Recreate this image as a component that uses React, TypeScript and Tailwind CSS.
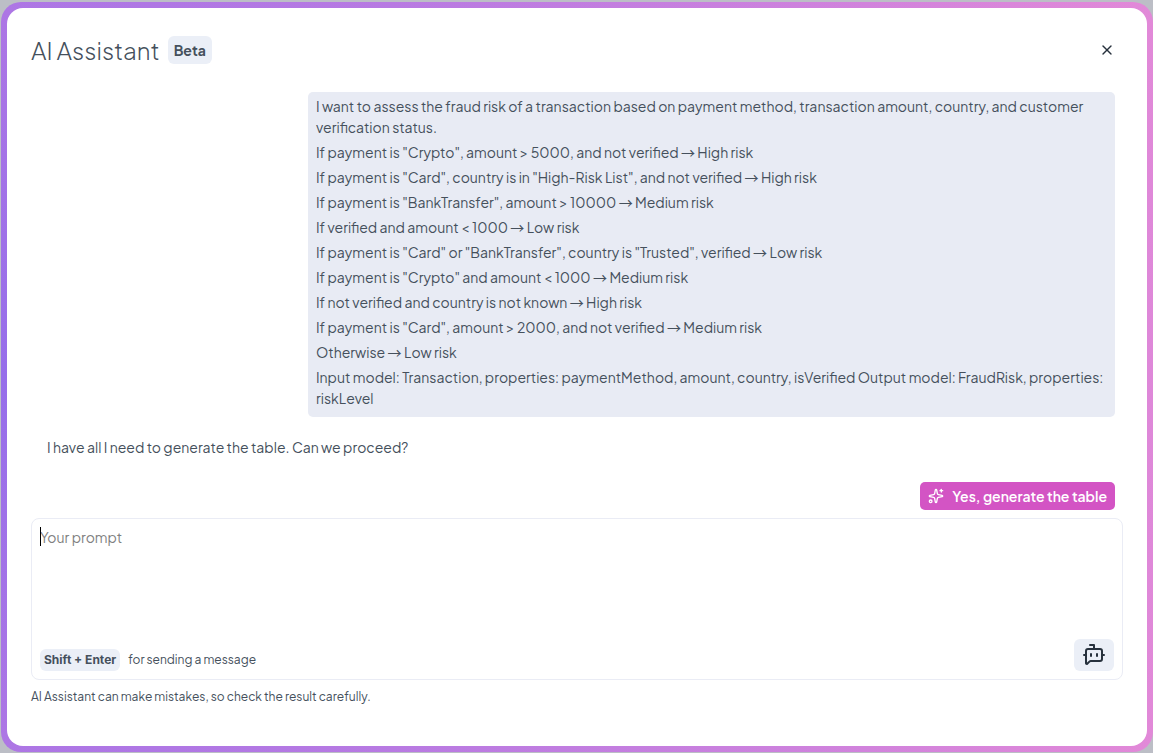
import { Fragment } from "react";
import { BotMessageSquare, Sparkles, X } from "lucide-react";

const rules = [
  "I want to assess the fraud risk of a transaction based on payment method, transaction amount, country, and customer verification status.",
  'If payment is "Crypto", amount > 5000, and not verified → High risk',
  'If payment is "Card", country is in "High-Risk List", and not verified → High risk',
  'If payment is "BankTransfer", amount > 10000 → Medium risk',
  "If verified and amount < 1000 → Low risk",
  'If payment is "Card" or "BankTransfer", country is "Trusted", verified → Low risk',
  'If payment is "Crypto" and amount < 1000 → Medium risk',
  "If not verified and country is not known → High risk",
  'If payment is "Card", amount > 2000, and not verified → Medium risk',
  "Otherwise → Low risk",
  "Input model: Transaction, properties: paymentMethod, amount, country, isVerified Output model: FraudRisk, properties: riskLevel",
];

function Rule({ text }: { text: string }) {
  return (
    <p>
      {text.split("→").map((part, index) => (
        <Fragment key={index}>
          {index > 0 && <span className="font-['Noto_Sans_CJK_SC',sans-serif] leading-none">→</span>}
          {part}
        </Fragment>
      ))}
    </p>
  );
}

export default function App() {
  return (
    <div className="flex min-h-screen bg-[#bcbec6] pt-0.5 pb-px pl-px font-['Plus_Jakarta_Sans','Inter',sans-serif] text-sm text-[#45505c]">
      <div className="flex min-w-0 flex-1 rounded-[20px] bg-[radial-gradient(circle_at_0%_50%,#966eea,#e289d8)] p-1.5">
        <main className="flex min-w-0 flex-1 flex-col rounded-2xl bg-white px-6 pt-7 pb-10">
          <header className="flex h-7 items-center justify-between">
            <div className="flex items-center gap-2">
              <h1 className="text-2xl leading-8 font-light">AI Assistant</h1>
              <span className="rounded-md bg-[#ebeff7] px-1.5 py-1 leading-5 font-bold">Beta</span>
            </div>
            <button type="button" aria-label="Close" className="mr-2 p-0 text-[#27313d]">
              <X size={16} strokeWidth={2} />
            </button>
          </header>

          <section className="mx-2 mt-7 flex flex-col">
            <div className="flex max-w-3/4 flex-col gap-1 self-end rounded-[5px] bg-[#e8ebf4] px-2 pt-1 pb-2 leading-[21px]">
              {rules.map((rule) => (
                <Rule key={rule} text={rule} />
              ))}
            </div>
            <p className="mt-5 px-2 leading-[21px]">
              I have all I need to generate the table. Can we proceed?
            </p>
            <button
              type="button"
              className="mt-6 flex h-7 items-center gap-2 self-end rounded-[5px] bg-[#d354c4] px-2 font-semibold text-white"
            >
              <Sparkles size={16} strokeWidth={2} />
              Yes, generate the table
            </button>
          </section>

          <form className="relative mt-2 flex flex-1 flex-col rounded-lg border border-[#eaecf5] p-2">
            <textarea
              aria-label="Your prompt"
              placeholder="Your prompt"
              className="w-full flex-1 resize-none leading-[21px] outline-none placeholder:text-[#808080]"
            />
            <span aria-hidden="true" className="absolute top-2 left-2 h-[19px] w-px bg-black" />
            <div className="flex items-end justify-between">
              <p className="flex items-center gap-2 text-xs">
                <kbd className="rounded-md bg-[#ebeff7] px-1 py-[3px] font-['Inter',sans-serif] leading-4 font-bold">
                  Shift + Enter
                </kbd>
                for sending a message
              </p>
              <button
                type="button"
                aria-label="Ask the assistant"
                className="flex h-8 w-10 items-center justify-center rounded-md bg-[#ebeff7] text-[#27313d]"
              >
                <BotMessageSquare size={24} strokeWidth={2} />
              </button>
            </div>
          </form>
          <p className="mt-2 text-xs leading-[18px]">
            AI Assistant can make mistakes, so check the result carefully.
          </p>
        </main>
      </div>
    </div>
  );
}
